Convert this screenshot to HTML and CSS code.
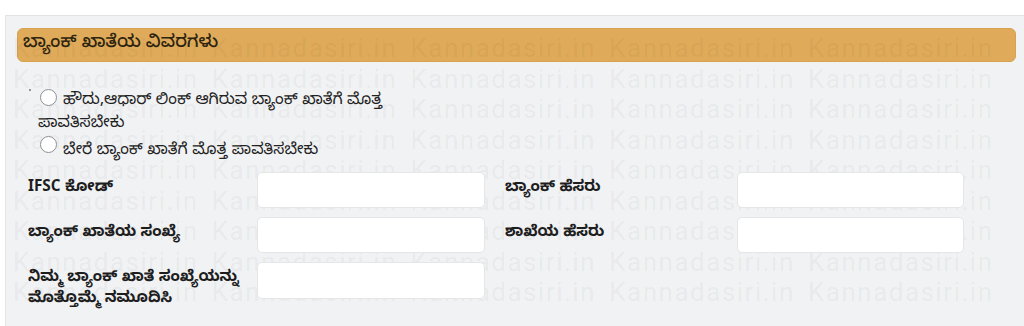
FILE: index.html
```html
<!DOCTYPE html>
<html lang="kn">
<head>
<meta charset="utf-8">
<title>ಬ್ಯಾಂಕ್ ಖಾತೆಯ ವಿವರಗಳು</title>
<link rel="stylesheet" href="styles.css">
</head>
<body>
<div class="page">
  <section class="card">
    <div class="card-head">ಬ್ಯಾಂಕ್ ಖಾತೆಯ ವಿವರಗಳು</div>
    <ul class="options">
      <li class="opt marked"><span class="radio"></span>ಹೌದು,ಆಧಾರ್ ಲಿಂಕ್ ಆಗಿರುವ ಬ್ಯಾಂಕ್ ಖಾತೆಗೆ ಮೊತ್ತ ಪಾವತಿಸಬೇಕು</li>
      <li class="opt"><span class="radio"></span>ಬೇರೆ ಬ್ಯಾಂಕ್ ಖಾತೆಗೆ ಮೊತ್ತ ಪಾವತಿಸಬೇಕು</li>
    </ul>
    <div class="fields">
      <div class="field"><span class="label">IFSC ಕೋಡ್</span><span class="input"></span></div>
      <div class="field r"><span class="label">ಬ್ಯಾಂಕ್ ಹೆಸರು</span><span class="input"></span></div>
      <div class="field"><span class="label">ಬ್ಯಾಂಕ್ ಖಾತೆಯ ಸಂಖ್ಯೆ</span><span class="input"></span></div>
      <div class="field r"><span class="label">ಶಾಖೆಯ ಹೆಸರು</span><span class="input"></span></div>
      <div class="field"><span class="label">ನಿಮ್ಮ ಬ್ಯಾಂಕ್ ಖಾತೆ ಸಂಖ್ಯೆಯನ್ನು ಮೊತ್ತೊಮ್ಮೆ ನಮೂದಿಸಿ</span><span class="input tall"></span></div>
    </div>
  </section>
  <div class="watermark" aria-hidden="true">
    <span>Kannadasiri.in</span><span>Kannadasiri.in</span><span>Kannadasiri.in</span><span>Kannadasiri.in</span><span>Kannadasiri.in</span>
    <span>Kannadasiri.in</span><span>Kannadasiri.in</span><span>Kannadasiri.in</span><span>Kannadasiri.in</span><span>Kannadasiri.in</span>
    <span>Kannadasiri.in</span><span>Kannadasiri.in</span><span>Kannadasiri.in</span><span>Kannadasiri.in</span><span>Kannadasiri.in</span>
    <span>Kannadasiri.in</span><span>Kannadasiri.in</span><span>Kannadasiri.in</span><span>Kannadasiri.in</span><span>Kannadasiri.in</span>
    <span>Kannadasiri.in</span><span>Kannadasiri.in</span><span>Kannadasiri.in</span><span>Kannadasiri.in</span><span>Kannadasiri.in</span>
    <span>Kannadasiri.in</span><span>Kannadasiri.in</span><span>Kannadasiri.in</span><span>Kannadasiri.in</span><span>Kannadasiri.in</span>
    <span>Kannadasiri.in</span><span>Kannadasiri.in</span><span>Kannadasiri.in</span><span>Kannadasiri.in</span><span>Kannadasiri.in</span>
    <span>Kannadasiri.in</span><span>Kannadasiri.in</span><span>Kannadasiri.in</span><span>Kannadasiri.in</span><span>Kannadasiri.in</span>
    <span>Kannadasiri.in</span><span>Kannadasiri.in</span><span>Kannadasiri.in</span><span>Kannadasiri.in</span><span>Kannadasiri.in</span>
  </div>
</div>
</body>
</html>
```

FILE: styles.css
```css
html, body {
  margin: 0;
  padding: 0;
  background: #ffffff;
}
body {
  font-family: "Noto Sans Kannada", "Lohit Kannada", "Noto Sans", sans-serif;
  color: #222;
  width: 1024px;
  height: 326px;
  overflow: hidden;
}
.page {
  position: relative;
  padding: 15px 0 0 5px;
  height: 311px;
  overflow: hidden;
}
.card {
  background: #f1f2f4;
  border-top: 1px solid #e2e3e5;
  border-left: 1px solid #e4e5e7;
  padding: 12px 8px 0 11px;
  height: 310px;
}
.card-head {
  height: 32px;
  line-height: 32px;
  background: #dfab5a;
  border: 1px solid #d8a24f;
  border-radius: 6px;
  padding-left: 5px;
  font-size: 17.7px;
  font-weight: 500;
  color: #2e2410;
}
.options {
  list-style: none;
  margin: 25px 0 0 0;
  padding: 0 0 0 21px;
  width: 400px;
  font-size: 15.7px;
  line-height: 23px;
  color: #222;
}
.opt {
  position: relative;
  padding-top: 3px;
  margin-bottom: 1px;
}
.marked::before {
  content: "";
  position: absolute;
  left: -9px;
  top: 2px;
  width: 2px;
  height: 2px;
  border-radius: 50%;
  background: #777;
}
.radio {
  position: relative;
  z-index: 2;
  float: left;
  box-sizing: border-box;
  width: 17px;
  height: 17px;
  margin: -4px 6px 0 2px;
  border: 1px solid #8d8f93;
  border-radius: 50%;
  background: #fff;
}
.marked .radio {
  margin-top: -1px;
}
.fields {
  margin: 9px 0 0 11px;
  display: grid;
  grid-template-columns: 457px 459px;
  column-gap: 20px;
  row-gap: 9px;
}
.field {
  display: grid;
  grid-template-columns: 229px 228px;
  align-items: start;
}
.field.r {
  grid-template-columns: 232px 227px;
}
.label {
  font-size: 15.3px;
  font-weight: 700;
  line-height: 21px;
  padding-top: 7px;
  color: #1e1e1e;
}
.input {
  position: relative;
  z-index: 2;
  display: block;
  box-sizing: border-box;
  height: 36px;
  background: #fff;
  border: 1px solid #e5e6e8;
  border-radius: 5px;
}
.input.tall {
  height: 37px;
}
.watermark {
  position: absolute;
  z-index: 1;
  top: 33px;
  left: 13px;
  display: grid;
  grid-template-columns: repeat(5, 198.75px);
  pointer-events: none;
  font-family: Roboto, "Liberation Sans", sans-serif;
  font-size: 26px;
  letter-spacing: 1.5px;
  line-height: 30.5px;
  color: rgba(0, 0, 0, 0.055);
  white-space: nowrap;
}
```
